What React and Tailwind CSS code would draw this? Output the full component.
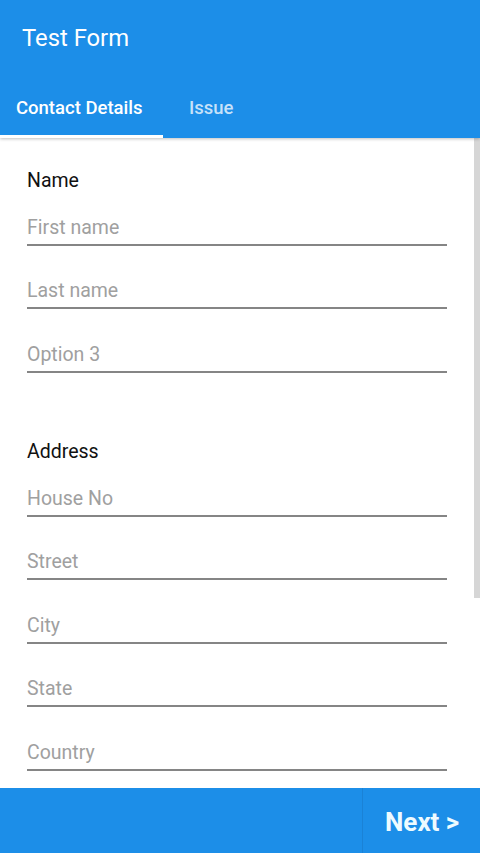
import React from "react";

const font = { fontFamily: "Roboto, 'Noto Sans', Arial, sans-serif" };

function Field({ placeholder, first }) {
  return (
    <div className={`${first ? "mt-[24.6px]" : "mt-[34.5px]"} border-b-2 border-[#858585] pb-[5px]`}>
      <div className="text-[19.5px] leading-[22px] text-[#a0a0a0]">{placeholder}</div>
    </div>
  );
}

function Label({ children, className = "" }) {
  return <div className={`text-[19.5px] leading-[22px] text-[#111] ${className}`}>{children}</div>;
}

export default function App() {
  return (
    <div className="w-[480px] h-[853px] flex flex-col bg-white overflow-hidden" style={font}>
      <div className="bg-[#1c8ee8] h-[138px] flex flex-col shadow-[0_1px_3px_rgba(0,0,0,0.25)] relative z-10">
        <div className="h-[90px] pl-[22px] pt-[23px] text-[23.8px] leading-[30px] text-white">Test Form</div>
        <div className="flex h-[48px]">
          <div className="w-[163px] flex flex-col">
            <div className="flex-1 pl-[16px] pt-[6px] text-[18.5px] leading-[24px] font-medium text-white">Contact Details</div>
            <div className="h-[3px] bg-white" />
          </div>
          <div className="pl-[26px] pt-[6px] text-[18.5px] leading-[24px] font-medium text-white/75">Issue</div>
        </div>
      </div>
      <div className="flex-1 flex overflow-hidden">
        <div className="flex-1 px-[27px] pt-[32px]">
          <Label>Name</Label>
          <Field placeholder="First name" first />
          <Field placeholder="Last name" />
          <Field placeholder="Option 3" />
          <Label className="mt-[68.4px]">Address</Label>
          <Field placeholder="House No" first />
          <Field placeholder="Street" />
          <Field placeholder="City" />
          <Field placeholder="State" />
          <Field placeholder="Country" />
        </div>
        <div className="w-[6px] flex flex-col">
          <div className="h-[460px] bg-[#d6d6d6]" />
        </div>
      </div>
      <div className="h-[65px] bg-[#1c8ee8] flex justify-end">
        <div className="w-[118px] border-l border-[#1a82d6] flex items-center pl-[22px] pt-[3px] text-[26px] font-bold text-[#eefbff]">
          Next &gt;
        </div>
      </div>
    </div>
  );
}
